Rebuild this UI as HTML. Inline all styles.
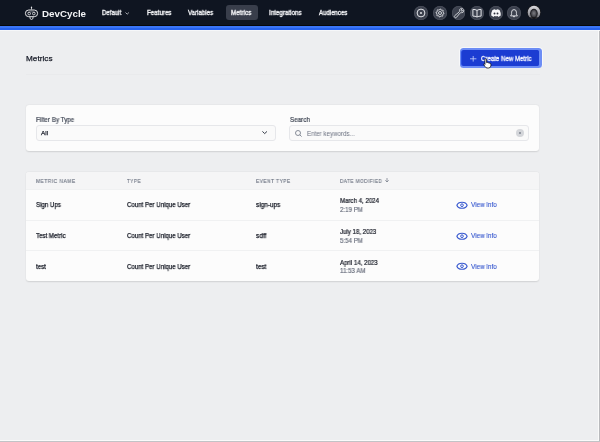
<!DOCTYPE html>
<html><head><meta charset="utf-8">
<style>
*{margin:0;padding:0;box-sizing:border-box}
html,body{width:600px;height:442px;overflow:hidden;background:#edeef0;font-family:"Liberation Sans",sans-serif;position:relative}
.a{position:absolute;white-space:nowrap;line-height:1;transform-origin:0 0;will-change:transform}
svg.a{overflow:visible}
.ic{position:absolute;top:6px;width:13.8px;height:13.8px;border-radius:50%;background:#3c414e;box-shadow:inset 0 0 0 0.8px #4a4f5b}
.ic svg{position:absolute;left:0;top:0}
.card{position:absolute;left:26px;width:513.4px;background:#fcfcfc;border-radius:3px;box-shadow:0 0.5px 1.5px rgba(0,0,0,0.12)}
.inp{position:absolute;top:125.2px;height:16.3px;border:1px solid #e6e7ea;border-radius:3px;background:#fafafa}
.rb{position:absolute;left:26px;width:513.4px;height:1px;background:#f0f1f2}
</style></head><body>
<div class="a" style="left:0;top:0;width:600px;height:25px;background:#0f1521"></div>
<div class="a" style="left:0;top:25px;width:600px;height:1px;background:#06080c"></div>
<div class="a" style="left:0;top:26px;width:600px;height:2px;background:#3a75f6"></div>
<div class="a" style="left:0;top:28px;width:600px;height:2px;background:#2763ee"></div>
<div class="a" style="left:0;top:30px;width:600px;height:1px;background:#f6f7f9"></div>

<svg class="a" style="left:22px;top:3px" width="20" height="20" viewBox="0 0 20 20">
  <path d="M9.5 3.2 L10.3 4.6 L9.9 5 L9.9 6.6 L9.1 6.6 L9.1 5 L8.7 4.6 Z" fill="#e8e8ea"/>
  <rect x="3.4" y="7" width="12.2" height="6.7" rx="3.35" fill="none" stroke="#e6e6e8" stroke-width="1"/>
  <path d="M5.6 9.2 Q9.5 8.3 13.4 9.2" fill="none" stroke="#c8c8cc" stroke-width="0.5"/>
  <circle cx="7.2" cy="10.6" r="1.3" fill="none" stroke="#eeeef0" stroke-width="0.8"/>
  <circle cx="11.8" cy="10.6" r="1.3" fill="none" stroke="#eeeef0" stroke-width="0.8"/>
  <path d="M7.9 13.9 Q7.8 16.5 9.5 16.5 Q11.2 16.5 11.1 13.9" fill="none" stroke="#e6e6e8" stroke-width="0.9"/>
</svg>
<svg class="a" style="left:124.7px;top:12px" width="5" height="3" viewBox="0 0 5 3"><path d="M0.5 0.5 L2.2 2.2 L3.9 0.5" fill="none" stroke="#cfd1d6" stroke-width="0.8"/></svg>
<div class="a" style="left:225.8px;top:5.3px;width:31.5px;height:15.2px;border-radius:3px;background:#393e4b"></div>

<div class="ic" style="left:414.1px;top:6.1px"><svg width="14" height="14" viewBox="0 0 14 14"><circle cx="7" cy="7" r="3.9" fill="none" stroke="#e4e6ea" stroke-width="1"/><circle cx="7" cy="7" r="0.9" fill="#f2f3f5"/></svg></div>
<div class="ic" style="left:433px;top:6.1px"><svg width="14" height="14" viewBox="0 0 14 14"><path d="M7.00 3.00 L7.78 3.08 L8.19 4.14 L8.72 4.42 L9.83 4.17 L10.33 4.78 L9.86 5.81 L10.04 6.40 L11.00 7.00 L10.92 7.78 L9.86 8.19 L9.58 8.72 L9.83 9.83 L9.22 10.33 L8.19 9.86 L7.60 10.04 L7.00 11.00 L6.22 10.92 L5.81 9.86 L5.28 9.58 L4.17 9.83 L3.67 9.22 L4.14 8.19 L3.96 7.60 L3.00 7.00 L3.08 6.22 L4.14 5.81 L4.42 5.28 L4.17 4.17 L4.78 3.67 L5.81 4.14 L6.40 3.96 Z" fill="none" stroke="#e4e6ea" stroke-width="0.85" stroke-linejoin="round"/><circle cx="7" cy="7" r="1.5" fill="none" stroke="#e4e6ea" stroke-width="0.85"/></svg></div>
<div class="ic" style="left:451.6px;top:6.3px"><svg width="14" height="14" viewBox="0 0 14 14"><g transform="translate(1.3 1.3) scale(0.48)"><path d="M21.75 6.75a4.5 4.5 0 01-4.884 4.484c-1.076-.091-2.264.071-2.95.904l-7.152 8.684a2.548 2.548 0 11-3.586-3.586l8.684-7.152c.833-.686.995-1.874.904-2.95a4.5 4.5 0 016.336-4.486l-3.276 3.276a3.004 3.004 0 002.25 2.25l3.276-3.276c.256.565.398 1.192.398 1.852z" fill="none" stroke="#e4e6ea" stroke-width="1.7" stroke-linejoin="round"/></g></svg></div>
<div class="ic" style="left:470px;top:6.1px"><svg width="14" height="14" viewBox="0 0 14 14"><path d="M2.9 3.4 Q5.2 3.3 7 4.4 Q8.8 3.3 11.1 3.4 V10.1 Q8.8 10 7 11 Q5.2 10 2.9 10.1 Z M7 4.4 V10.9" fill="none" stroke="#e4e6ea" stroke-width="1" stroke-linejoin="round"/></svg></div>
<div class="ic" style="left:488.8px;top:6.1px"><svg width="14" height="14" viewBox="0 0 14 14"><path d="M3.3 4.3 Q4.8 3.3 5.9 3.2 L6.3 3.8 Q7 3.7 7.7 3.8 L8.1 3.2 Q9.2 3.3 10.7 4.3 Q12 6.8 11.8 9.6 Q10.6 10.6 9.3 10.9 L8.7 10 Q7 10.4 5.3 10 L4.7 10.9 Q3.4 10.6 2.2 9.6 Q2 6.8 3.3 4.3 Z" fill="#f5f6f8"/><ellipse cx="5.5" cy="7.5" rx="0.95" ry="1" fill="#2e323d"/><ellipse cx="8.5" cy="7.5" rx="0.95" ry="1" fill="#2e323d"/></svg></div>
<div class="ic" style="left:507.2px;top:6.1px"><svg width="14" height="14" viewBox="0 0 14 14"><path d="M3.6 9.9 Q4.6 9 4.6 7.6 L4.6 6.2 Q4.6 3.6 7 3.6 Q9.4 3.6 9.4 6.2 L9.4 7.6 Q9.4 9 10.4 9.9 Z M6 10.4 Q7 11.4 8 10.4" fill="none" stroke="#e4e6ea" stroke-width="0.95" stroke-linejoin="round"/></svg></div>
<svg class="a" style="left:526.5px;top:5.2px" width="14" height="14" viewBox="0 0 14 14">
<defs><clipPath id="av"><circle cx="7" cy="7" r="7"/></clipPath>
<linearGradient id="hair" x1="0" y1="0" x2="0" y2="1"><stop offset="0" stop-color="#dcdce0"/><stop offset="0.6" stop-color="#9a9aa0"/><stop offset="1" stop-color="#5a5a60"/></linearGradient>
<radialGradient id="face" cx="0.5" cy="0.45" r="0.6"><stop offset="0" stop-color="#7c7c82"/><stop offset="0.7" stop-color="#4a4a50"/><stop offset="1" stop-color="#2a2a2e"/></radialGradient></defs>
<g clip-path="url(#av)">
<rect width="14" height="14" fill="#18191d"/>
<ellipse cx="7" cy="7.6" rx="6.3" ry="6.9" fill="url(#hair)"/>
<ellipse cx="6.9" cy="8.6" rx="3.9" ry="4.8" fill="#25252a"/>
<ellipse cx="6.9" cy="8.6" rx="2.8" ry="3.6" fill="url(#face)"/>
<rect x="0" y="12.4" width="14" height="2" fill="#111114"/>
</g></svg>

<div class="a" style="left:26px;top:74px;width:514px;height:1px;background:#e9eaec"></div>
<div class="a" style="left:459px;top:47.2px;width:84px;height:21.4px;border-radius:4.5px;background:#f7f8fa"></div>
<div class="a" style="left:460px;top:48.1px;width:82px;height:19.6px;border-radius:3.5px;background:#6d8df5"></div>
<div class="a" style="left:461.4px;top:49.8px;width:77.8px;height:16.3px;border-radius:2.5px;background:#2a4fe0"></div>
<div class="a" style="left:461.8px;top:50.2px;width:77px;height:15.6px;border-radius:2px;background:#1b3cd2"></div>
<svg class="a" style="left:470px;top:55.5px" width="6.4" height="5.6" viewBox="0 0 6.4 5.6"><path d="M3.2 0 V5.6 M0 2.8 H6.4" stroke="#c9d3fb" stroke-width="0.8"/></svg>

<div class="card" style="top:105.3px;height:46.2px"></div>
<div class="inp" style="left:35.6px;width:240px"></div>
<svg class="a" style="left:262.3px;top:131.3px" width="5.4" height="3.4" viewBox="0 0 5.4 3.4"><path d="M0.7 0.7 L2.7 2.6 L4.7 0.7" fill="none" stroke="#343a47" stroke-width="1" stroke-linecap="round" stroke-linejoin="round"/></svg>
<div class="inp" style="left:289.3px;width:240px"></div>
<svg class="a" style="left:295.2px;top:130px" width="7" height="7" viewBox="0 0 7 7"><circle cx="3" cy="3" r="2.5" fill="none" stroke="#6b7280" stroke-width="0.8"/><path d="M4.8 4.8 L6.6 6.6" stroke="#6b7280" stroke-width="0.8"/></svg>
<div class="a" style="left:516px;top:129px;width:8px;height:8px;border-radius:50%;background:#d4d6da"></div>
<svg class="a" style="left:516px;top:129px" width="8" height="8" viewBox="0 0 8 8"><path d="M3.1 3.1 L4.9 4.9 M4.9 3.1 L3.1 4.9" stroke="#6b7280" stroke-width="0.7"/></svg>

<div class="card" style="top:172px;height:109.1px;overflow:hidden"><div style="height:17.6px;background:#f5f5f6"></div></div>
<div class="rb" style="top:189.4px"></div>
<div class="rb" style="top:219.8px"></div>
<div class="rb" style="top:250.4px"></div>
<svg class="a" style="left:385.2px;top:178.2px" width="4" height="4.4" viewBox="0 0 4 4.4"><path d="M2 0 V4 M0.3 2.3 L2 4 L3.7 2.3" fill="none" stroke="#6b7280" stroke-width="0.7"/></svg>
<div class="a" style="left:598px;top:30px;width:1px;height:411px;background:#fafafa"></div>
<div class="a" style="left:599px;top:31px;width:1px;height:411px;background:#b9babd"></div>
<div class="a" style="left:0;top:440px;width:599px;height:1px;background:#fafafa"></div>
<div class="a" style="left:0;top:441px;width:600px;height:1px;background:#c2c3c6"></div>

<div class="a" id="devcycle" style="left:42.2px;top:8.8px;font-size:9.6px;font-weight:bold;color:#f4f5f7;letter-spacing:0px;transform:scaleX(1.0200);">DevCycle</div>
<div class="a" id="default" style="left:101.6px;top:10.3px;font-size:6.5px;font-weight:normal;color:#f2f3f6;letter-spacing:0.1px;transform:scaleX(0.9080);-webkit-text-stroke:0.35px #f2f3f6">Default</div>
<div class="a" id="features" style="left:147px;top:10.3px;font-size:6.5px;font-weight:normal;color:#f2f3f6;letter-spacing:0.1px;transform:scaleX(0.9291);-webkit-text-stroke:0.35px #f2f3f6">Features</div>
<div class="a" id="variables" style="left:188.3px;top:10.3px;font-size:6.5px;font-weight:normal;color:#f2f3f6;letter-spacing:0.1px;transform:scaleX(0.9120);-webkit-text-stroke:0.35px #f2f3f6">Variables</div>
<div class="a" id="metricsnav" style="left:230.9px;top:10.3px;font-size:6.5px;font-weight:normal;color:#f2f3f6;letter-spacing:0.1px;transform:scaleX(0.9447);-webkit-text-stroke:0.35px #f2f3f6">Metrics</div>
<div class="a" id="integrations" style="left:269px;top:10.3px;font-size:6.5px;font-weight:normal;color:#f2f3f6;letter-spacing:0.1px;transform:scaleX(0.9286);-webkit-text-stroke:0.35px #f2f3f6">Integrations</div>
<div class="a" id="audiences" style="left:319.3px;top:10.3px;font-size:6.5px;font-weight:normal;color:#f2f3f6;letter-spacing:0.1px;transform:scaleX(0.9080);-webkit-text-stroke:0.35px #f2f3f6">Audiences</div>
<div class="a" id="heading" style="left:25.9px;top:54.9px;font-size:8.0px;font-weight:normal;color:#161a26;letter-spacing:0.05px;transform:scaleX(1.0170);-webkit-text-stroke:0.25px #161a26">Metrics</div>
<div class="a" id="create" style="left:480.6px;top:55.5px;font-size:6.7px;font-weight:normal;color:#f6f7ff;letter-spacing:0.05px;transform:scaleX(0.9007);-webkit-text-stroke:0.3px #f6f7ff">Create New Metric</div>
<div class="a" id="filterby" style="left:36px;top:116.8px;font-size:6.5px;font-weight:normal;color:#3b4250;letter-spacing:0.1px;transform:scaleX(0.9332);-webkit-text-stroke:0.2px #3b4250">Filter By Type</div>
<div class="a" id="all" style="left:41.2px;top:130px;font-size:6.2px;font-weight:normal;color:#1f2430;letter-spacing:0px;transform:scaleX(1.0312);-webkit-text-stroke:0.25px #1f2430">All</div>
<div class="a" id="search" style="left:289.5px;top:116.8px;font-size:6.5px;font-weight:normal;color:#3b4250;letter-spacing:0.1px;transform:scaleX(0.9412);-webkit-text-stroke:0.2px #3b4250">Search</div>
<div class="a" id="enter" style="left:306.8px;top:130.6px;font-size:6.5px;font-weight:normal;color:#6b7180;letter-spacing:0px;transform:scaleX(0.9494);">Enter keywords...</div>
<div class="a" id="th1" style="left:35.8px;top:178.6px;font-size:5.4px;font-weight:normal;color:#6b7280;letter-spacing:0.55px;transform:scaleX(0.9040);-webkit-text-stroke:0.12px #6b7280">METRIC NAME</div>
<div class="a" id="th2" style="left:127px;top:178.6px;font-size:5.4px;font-weight:normal;color:#6b7280;letter-spacing:0.55px;transform:scaleX(0.8628);-webkit-text-stroke:0.12px #6b7280">TYPE</div>
<div class="a" id="th3" style="left:256px;top:178.6px;font-size:5.4px;font-weight:normal;color:#6b7280;letter-spacing:0.55px;transform:scaleX(0.8892);-webkit-text-stroke:0.12px #6b7280">EVENT TYPE</div>
<div class="a" id="th4" style="left:339.8px;top:178.6px;font-size:5.4px;font-weight:normal;color:#6b7280;letter-spacing:0.55px;transform:scaleX(0.8631);-webkit-text-stroke:0.12px #6b7280">DATE MODIFIED</div>
<div class="a" id="name0" style="left:36px;top:202.3px;font-size:6.8px;font-weight:normal;color:#151924;letter-spacing:0px;transform:scaleX(0.9000);-webkit-text-stroke:0.25px #151924">Sign Ups</div>
<div class="a" id="type0" style="left:127px;top:202.3px;font-size:6.8px;font-weight:normal;color:#151924;letter-spacing:0px;transform:scaleX(0.8991);-webkit-text-stroke:0.25px #151924">Count Per Unique User</div>
<div class="a" id="ev0" style="left:256px;top:202.3px;font-size:6.8px;font-weight:normal;color:#151924;letter-spacing:0px;transform:scaleX(0.9449);-webkit-text-stroke:0.25px #151924">sign-ups</div>
<div class="a" id="date0" style="left:340px;top:198.3px;font-size:6.6px;font-weight:normal;color:#151924;letter-spacing:0px;transform:scaleX(0.9250);-webkit-text-stroke:0.2px #151924">March 4, 2024</div>
<div class="a" id="time0" style="left:340px;top:206.9px;font-size:6.6px;font-weight:normal;color:#626877;letter-spacing:0px;transform:scaleX(0.9300);-webkit-text-stroke:0.15px #626877">2:19 PM</div>
<div class="a" id="vi0" style="left:470.8px;top:202.3px;font-size:6.6px;font-weight:normal;color:#3859cf;letter-spacing:0px;transform:scaleX(0.9545);-webkit-text-stroke:0.12px #3859cf">View Info</div>
<div class="a" id="name1" style="left:36px;top:232.9px;font-size:6.8px;font-weight:normal;color:#151924;letter-spacing:0px;transform:scaleX(0.9000);-webkit-text-stroke:0.25px #151924">Test Metric</div>
<div class="a" id="type1" style="left:127px;top:232.9px;font-size:6.8px;font-weight:normal;color:#151924;letter-spacing:0px;transform:scaleX(0.8991);-webkit-text-stroke:0.25px #151924">Count Per Unique User</div>
<div class="a" id="ev1" style="left:256px;top:232.9px;font-size:6.8px;font-weight:normal;color:#151924;letter-spacing:0px;transform:scaleX(0.9449);-webkit-text-stroke:0.25px #151924">sdff</div>
<div class="a" id="date1" style="left:340px;top:228.9px;font-size:6.6px;font-weight:normal;color:#151924;letter-spacing:0px;transform:scaleX(0.9250);-webkit-text-stroke:0.2px #151924">July 18, 2023</div>
<div class="a" id="time1" style="left:340px;top:237.5px;font-size:6.6px;font-weight:normal;color:#626877;letter-spacing:0px;transform:scaleX(0.9300);-webkit-text-stroke:0.15px #626877">5:54 PM</div>
<div class="a" id="vi1" style="left:470.8px;top:232.9px;font-size:6.6px;font-weight:normal;color:#3859cf;letter-spacing:0px;transform:scaleX(0.9545);-webkit-text-stroke:0.12px #3859cf">View Info</div>
<div class="a" id="name2" style="left:36px;top:263.5px;font-size:6.8px;font-weight:normal;color:#151924;letter-spacing:0px;transform:scaleX(0.9000);-webkit-text-stroke:0.25px #151924">test</div>
<div class="a" id="type2" style="left:127px;top:263.5px;font-size:6.8px;font-weight:normal;color:#151924;letter-spacing:0px;transform:scaleX(0.8991);-webkit-text-stroke:0.25px #151924">Count Per Unique User</div>
<div class="a" id="ev2" style="left:256px;top:263.5px;font-size:6.8px;font-weight:normal;color:#151924;letter-spacing:0px;transform:scaleX(0.9449);-webkit-text-stroke:0.25px #151924">test</div>
<div class="a" id="date2" style="left:340px;top:259.5px;font-size:6.6px;font-weight:normal;color:#151924;letter-spacing:0px;transform:scaleX(0.9250);-webkit-text-stroke:0.2px #151924">April 14, 2023</div>
<div class="a" id="time2" style="left:340px;top:268.1px;font-size:6.6px;font-weight:normal;color:#626877;letter-spacing:0px;transform:scaleX(0.9300);-webkit-text-stroke:0.15px #626877">11:53 AM</div>
<div class="a" id="vi2" style="left:470.8px;top:263.5px;font-size:6.6px;font-weight:normal;color:#3859cf;letter-spacing:0px;transform:scaleX(0.9545);-webkit-text-stroke:0.12px #3859cf">View Info</div>
<svg class="a" style="left:455.6px;top:201.1px" width="12" height="9" viewBox="0 0 12 9"><path d="M0.9 4.2 C2.2 0.2 9.8 0.2 11.1 4.2 C9.8 8.2 2.2 8.2 0.9 4.2 Z" fill="none" stroke="#3859cf" stroke-width="1.15"/><circle cx="6" cy="4.2" r="1.35" fill="none" stroke="#3859cf" stroke-width="1"/></svg><svg class="a" style="left:455.6px;top:231.7px" width="12" height="9" viewBox="0 0 12 9"><path d="M0.9 4.2 C2.2 0.2 9.8 0.2 11.1 4.2 C9.8 8.2 2.2 8.2 0.9 4.2 Z" fill="none" stroke="#3859cf" stroke-width="1.15"/><circle cx="6" cy="4.2" r="1.35" fill="none" stroke="#3859cf" stroke-width="1"/></svg><svg class="a" style="left:455.6px;top:262.3px" width="12" height="9" viewBox="0 0 12 9"><path d="M0.9 4.2 C2.2 0.2 9.8 0.2 11.1 4.2 C9.8 8.2 2.2 8.2 0.9 4.2 Z" fill="none" stroke="#3859cf" stroke-width="1.15"/><circle cx="6" cy="4.2" r="1.35" fill="none" stroke="#3859cf" stroke-width="1"/></svg>
<svg class="a" style="left:482.8px;top:58.4px" width="9" height="10.5" viewBox="0 0 9 10.5"><path d="M1.9 1.2 Q2.7 0.4 3.5 1.2 L3.6 4.6 L4.2 4.4 Q5 4.3 5.3 4.8 Q6.2 4.6 6.6 5.2 Q7.6 5.1 7.9 6 L7.9 8 Q7.6 9.9 5.6 10 L4 10 Q2.8 9.8 2.2 8.8 L0.7 6.6 Q0.5 5.8 1.3 5.8 Q1.7 5.9 2 6.4 Z" fill="#ffffff" stroke="#0d0d0d" stroke-width="0.75" stroke-linejoin="round"/></svg>
</body></html>
